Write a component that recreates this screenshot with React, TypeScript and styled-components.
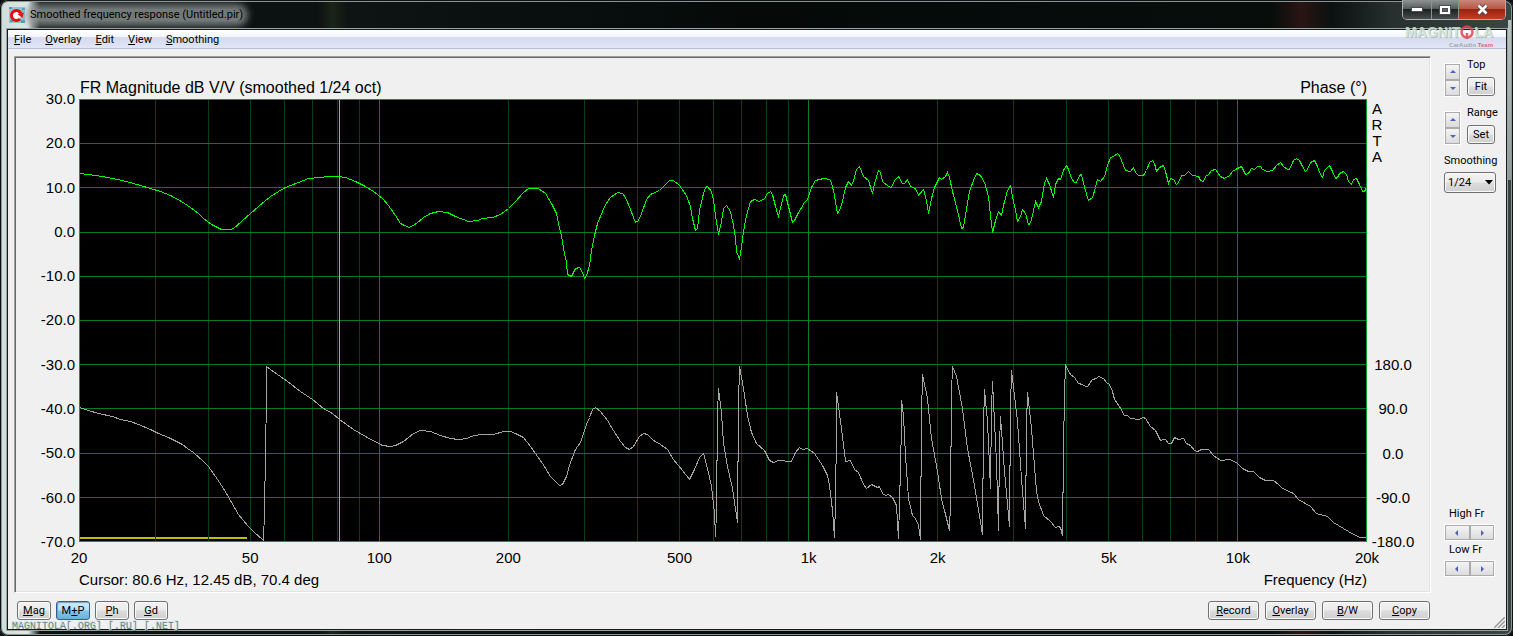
import React from "react";
import styled, { createGlobalStyle, css } from "styled-components";

const GlobalStyle = createGlobalStyle`
  * { box-sizing: border-box; }
  body { margin: 0; background: #0a0f0e; }
  button, select { font: inherit; color: inherit; margin: 0; }
`;

const uiFont = `Roboto, "Liberation Sans", sans-serif`;
const chartFont = `"Liberation Sans", Arial, sans-serif`;

/* ---------- window ---------- */

const Frame = styled.main`
  position: relative;
  display: flex;
  flex-direction: column;
  min-height: 100vh;
  padding: 0 6px 6px 7px;
  border-radius: 8px;
  font: 11px/14px ${uiFont};
  color: #000;
  background:
    linear-gradient(#b9c3c1, #8f9a98) right 0 top 20px / 5px 160px no-repeat,
    linear-gradient(90deg, #cfdcd9 0, #dfe8e6 28px, rgba(220, 230, 228, 0) 40px) left top / 60px 100% no-repeat,
    linear-gradient(90deg, #0b1211 0, #0b1211 21%, #1a2418 22%, #0d1413 23%, #050a09 50%, #060d0b 84%, #2a1513 86%, #0a1110 88%, #27302f 92%, #3b4544 100%);
  box-shadow: inset 0 0 0 1px #0c1010, inset 0 0 0 2px #8b9694;
`;

const TitleBar = styled.header`
  display: flex;
  justify-content: space-between;
  align-items: flex-start;
  height: 29px;
  padding-left: 2px;
`;

const TitleText = styled.h1`
  display: flex;
  align-items: center;
  gap: 5px;
  margin: 7px 0 0;
  font: inherit;
  line-height: 16px;

  span {
    background: rgba(150, 156, 155, 0.75);
    box-shadow: 0 0 7px 5px rgba(150, 156, 155, 0.75);
    border-radius: 8px;
    line-height: 12px;
  }
`;

const CaptionGroup = styled.div`
  display: flex;
  height: 20px;
  margin: 0 1px;
  border: 1px solid #a9b1b0;
  border-top: 0;
  border-radius: 0 0 5px 5px;
  overflow: hidden;
`;

const CaptionButton = styled.button<{ $w: number; $danger?: boolean }>`
  display: grid;
  place-items: center;
  width: ${(p) => p.$w}px;
  padding: 0;
  border: 0;
  border-left: 1px solid #8b9392;
  &:first-child { border-left: 0; }
  background: ${(p) =>
    p.$danger
      ? "linear-gradient(#c98678 0, #b85a48 45%, #9c2312 50%, #c43c20 100%)"
      : "linear-gradient(#8d9392 0, #565d5c 45%, #1c2221 50%, #474e4d 100%)"};
`;

const Client = styled.div`
  flex: 1;
  display: flex;
  flex-direction: column;
  border: 1px solid #15191a;
  background: #f0f0f0;
  box-shadow: 0 0 0 1px #9aa5a3;
`;

const MenuBar = styled.nav`
  display: flex;
  gap: 14px;
  height: 19px;
  padding: 0 6px;
  border-bottom: 1px solid #b5bbd3;
  background: linear-gradient(#fff 0, #f2f5fb 38%, #d5dbee 42%, #e0e6f5 100%);
`;

const MenuItem = styled.a`
  color: #000;
  text-decoration: none;
  line-height: 20px;
`;

const Key = styled.u`
  text-underline-offset: 1px;
`;

/* ---------- body ---------- */

const Body = styled.div`
  flex: 1;
  display: grid;
  grid-template-columns: minmax(0, 1fr) 75px;
  padding: 7px 0 0 6px;
`;

const Panel = styled.section`
  display: grid;
  grid-template-columns: 64px minmax(0, 1fr) 63px;
  padding: 21px 0 2px;
  border: 1px solid;
  border-color: #a0a0a0 #fff #fff #a0a0a0;
  box-shadow: inset 1px 1px 0 #696969, inset -1px -1px 0 #e3e3e3;
  font: 15px/20px ${chartFont};
`;

const ChartHeader = styled.div`
  grid-column: 2;
  display: flex;
  justify-content: space-between;
  margin-bottom: 1px;
  padding-left: 1px;
  font-size: 16px;
`;

const LeftAxis = styled.div`
  grid-column: 1;
  display: flex;
  flex-direction: column;
  justify-content: space-between;
  margin: -10px 0;
  padding-right: 4px;
  text-align: right;
`;

const RightAxis = styled.div`
  display: flex;
  flex-direction: column;
  justify-content: space-between;
  margin-bottom: -10px;
`;

const Brand = styled.div`
  display: flex;
  flex-direction: column;
  align-items: center;
  width: 20px;
  padding-top: 2px;
  line-height: 16px;
`;

const PhaseScale = styled.div`
  display: flex;
  flex-direction: column;
  justify-content: space-between;
  width: 52px;
  height: 197px;
  text-align: center;
`;

const Plot = styled.svg`
  display: block;
  width: 100%;
  height: 443px;
  background: #000;
  shape-rendering: crispEdges;

  line, polyline, rect {
    fill: none;
    vector-effect: non-scaling-stroke;
  }
`;

const BottomAxis = styled.div`
  grid-column: 2;
  display: flex;
  margin-top: 6px;
`;

const Tick = styled.span<{ $span: number }>`
  flex: ${(p) => p.$span} 0 0;
  min-width: 0;
  display: flex;

  span {
    display: flex;
    justify-content: center;
    width: 0;
    white-space: nowrap;
  }
`;

const LastTick = styled.span`
  display: flex;
  justify-content: center;
  width: 0;
`;

const ChartFooter = styled.div`
  grid-column: 2;
  display: flex;
  justify-content: space-between;
  margin-top: 2px;
`;

/* ---------- controls ---------- */

const Side = styled.aside`
  display: flex;
  flex-direction: column;
  justify-content: space-between;
  padding: 2px 9px 16px 13px;
`;

const Stack = styled.div<{ $gap?: number }>`
  display: flex;
  flex-direction: column;
  gap: ${(p) => p.$gap ?? 0}px;
`;

const SpinRow = styled.div`
  display: grid;
  grid-template-columns: 17px 33px;
  column-gap: 6px;
  height: 48px;
`;

const Spin = styled.div<{ $horizontal?: boolean }>`
  display: flex;
  flex-direction: ${(p) => (p.$horizontal ? "row" : "column")};
  align-self: start;
  width: ${(p) => (p.$horizontal ? "51px" : "17px")};
  height: ${(p) => (p.$horizontal ? "17px" : "34px")};
  margin-top: ${(p) => (p.$horizontal ? "0" : "5px")};
  border: 1px solid #fff;
`;

const SpinButton = styled.button`
  flex: 1;
  display: grid;
  place-items: center;
  min-width: 0;
  min-height: 0;
  padding: 0;
  border: 1px solid #a9abae;
  background: linear-gradient(#f4f4f4, #dcdcdc);
`;

const FieldLabel = styled.label`
  white-space: nowrap;
`;

const SpinCaption = styled.span`
  padding: 2px 0 3px 5px;
`;

const face = css`
  border: 1px solid #707070;
  border-radius: 3px;
  background: linear-gradient(#f2f2f2 0, #ebebeb 48%, #dddddd 52%, #cfcfcf 100%);
  box-shadow: inset 0 0 0 1px #fafafa;
`;

const PushButton = styled.button<{ $w: number; $active?: boolean }>`
  ${face}
  width: ${(p) => p.$w}px;
  height: 19px;
  padding: 0;
  line-height: 16px;
  ${(p) =>
    p.$active &&
    css`
      border-color: #2c628b;
      background: linear-gradient(#d6ebf7 0, #b5dcf0 48%, #86c4e6 52%, #68b3db 100%);
      box-shadow: inset 1px 1px 1px #7d9fb4;
    `}
`;

const SelectBox = styled.div`
  display: grid;
  align-items: center;
  margin-top: 4px;

  select, svg { grid-area: 1 / 1; }
  svg { justify-self: end; margin-right: 4px; pointer-events: none; }
`;

const Select = styled.select`
  ${face}
  appearance: none;
  width: 52px;
  height: 21px;
  padding: 0 3px;
`;

const Footer = styled.footer`
  display: flex;
  justify-content: space-between;
  padding: 8px 76px 9px 9px;
`;

const Group = styled.div<{ $gap: number }>`
  display: flex;
  gap: ${(p) => p.$gap}px;
`;

/* ---------- overlays ---------- */

const Logo = styled.div`
  position: absolute;
  top: 22px;
  right: 20px;
  display: flex;
  flex-direction: column;
  align-items: flex-end;
  opacity: 0.85;
`;

const LogoWord = styled.div`
  display: flex;
  align-items: center;
  height: 20px;
  color: #cfe3d4;
  font: bold 14px/20px "Liberation Sans", sans-serif;
  text-shadow: 1px 1px 0 #a9b8b0;
`;

const LogoTag = styled.div`
  color: #9a9aa4;
  font: bold 6px/7px "Liberation Sans", sans-serif;
  b { color: #e0525c; }
`;

const SiteMark = styled.div`
  position: absolute;
  left: 12px;
  bottom: 3px;
  color: #6f8387;
  font: 10px/12px "Liberation Mono", monospace;
  text-shadow: -1px -1px 0 #c3e2e8;
  white-space: pre;
`;

const Grip = styled.svg`
  position: absolute;
  right: 8px;
  bottom: 8px;
`;

/* ---------- chart data, in plot pixels with the origin at (79, 99) ---------- */

const magnitude =
  "79,173 88,174 94,175 102,176 112,178 122,180 133,183 140,185 150,188 160,191 170,195 181,201 190,207 198,213 203,218 211,224 217,227 221,229 230,229 233,228 241,221 250,213 258,206 270,196 278,191 285,187 298,182 308,178 320,177 328,176 338,176 345,177 355,181 365,186 373,191 382,198 388,205 395,215 400,223 404,225 409,227 416,223 423,217 430,213 438,211 447,212 455,216 468,221 477,220 482,218 492,217 500,214 508,208 515,201 523,192 528,188 538,188 545,193 551,203 556,213 558,223 561,235 563,248 566,262 567,274 571,276 575,268 579,267 582,272 584,278 586,275 589,265 591,250 594,235 597,223 602,211 605,204 610,197 617,192 622,193 625,197 630,209 635,222 638,220 641,213 646,199 650,194 659,190 663,186 669,180 673,180 679,185 686,195 690,206 692,218 695,230 697,228 699,210 703,193 705,187 707,186 711,191 713,200 715,215 718,234 721,221 723,208 726,205 730,211 733,225 735,238 736,251 738,256 739,259 741,246 743,231 746,215 750,201 754,199 759,201 764,198 767,193 770,191 772,194 775,206 778,216 780,208 783,195 785,194 788,206 792,222 794,220 797,214 800,209 804,202 807,199 811,187 815,180 823,178 829,179 831,182 834,195 837,213 839,210 842,201 845,187 848,181 851,185 853,180 856,169 859,166 863,176 868,180 872,193 874,183 878,170 880,172 882,181 888,186 891,187 894,180 898,176 902,183 904,183 907,179 910,186 915,188 918,195 923,189 926,200 928,213 931,198 934,187 939,177 941,179 945,176 947,172 949,177 952,191 957,210 961,228 963,227 966,208 969,191 973,180 976,173 980,175 984,182 988,196 990,215 992,232 995,220 998,211 1001,215 1003,205 1007,190 1010,185 1012,196 1015,210 1017,221 1020,216 1022,209 1025,213 1028,224 1030,223 1033,210 1035,201 1038,207 1041,201 1044,183 1046,178 1049,184 1053,197 1055,184 1058,178 1060,179 1063,170 1066,165 1068,169 1071,178 1074,182 1076,182 1079,175 1081,174 1084,187 1088,200 1092,197 1095,187 1097,179 1100,181 1104,176 1107,165 1110,157 1113,156 1117,153 1119,155 1123,165 1125,170 1130,171 1133,167 1135,172 1138,175 1143,175 1146,170 1149,162 1152,160 1154,163 1156,171 1159,167 1163,165 1165,171 1168,183 1170,178 1173,179 1176,184 1178,182 1181,175 1184,175 1188,171 1192,175 1198,176 1200,180 1203,181 1205,176 1208,174 1211,170 1215,169 1220,176 1224,178 1229,175 1232,171 1237,168 1241,166 1245,174 1248,173 1251,168 1254,169 1257,166 1260,166 1262,169 1267,171 1272,170 1276,165 1280,162 1283,166 1287,169 1289,169 1293,160 1296,158 1299,160 1302,166 1305,171 1307,169 1310,162 1314,160 1317,166 1319,172 1322,177 1324,170 1329,165 1332,171 1335,178 1337,177 1339,173 1343,171 1346,174 1348,181 1351,184 1353,179 1356,178 1359,184 1362,191 1364,191 1366,187";

const phase =
  "79,407 88,410 98,413 112,416 120,419 130,421 138,424 150,429 158,433 168,437 182,444 187,448 193,452 203,461 208,466 215,476 223,488 230,500 238,514 247,525 253,531 263,540 264,511 265,453 266,395 266,366 270,369 287,381 300,391 312,399 323,408 332,413 339,419 353,429 365,436 382,445 390,446 395,445 403,441 413,433 420,430 430,431 440,435 450,438 458,439 467,438 470,436 480,434 493,434 503,431 510,431 515,433 523,437 530,446 542,463 550,476 559,485 562,484 566,476 569,465 574,451 577,446 580,442 582,436 586,424 589,417 592,409 595,407 600,411 607,420 613,430 620,441 625,447 629,449 633,446 639,436 643,433 647,434 653,440 660,444 667,449 673,459 682,470 689,479 694,469 699,457 703,453 707,468 711,486 714,513 715,536 716,511 717,413 718,388 721,413 723,443 727,466 732,488 737,522 738,405 739,366 743,388 747,415 751,432 756,443 764,450 769,460 773,462 778,460 791,461 795,452 799,447 802,449 807,448 814,453 822,465 827,475 829,485 832,510 834,537 835,500 836,430 836,392 838,406 842,436 845,461 850,460 854,469 858,472 863,484 866,488 871,484 877,487 879,486 882,493 885,495 888,494 892,497 896,505 898,538 900,468 901,423 901,400 903,415 905,455 908,498 912,515 915,518 918,525 920,539 921,417 922,374 927,398 931,438 937,471 941,498 949,530 950,502 951,393 952,366 956,376 962,408 967,448 974,485 982,534 983,425 984,389 987,421 990,488 991,408 992,381 996,462 998,530 999,445 1000,416 1004,471 1009,526 1010,408 1011,370 1017,421 1021,478 1025,528 1026,425 1027,392 1031,428 1036,491 1038,501 1043,515 1050,521 1055,527 1058,526 1060,527 1062,535 1063,450 1064,393 1065,365 1070,374 1074,377 1078,383 1082,384 1085,386 1087,386 1092,379 1096,378 1098,376 1103,378 1106,382 1109,384 1112,391 1114,399 1119,406 1124,415 1127,415 1130,418 1138,419 1143,417 1145,418 1150,426 1155,430 1160,440 1163,439 1165,439 1168,443 1171,443 1174,437 1178,439 1183,438 1186,443 1190,445 1194,450 1197,451 1201,449 1208,449 1213,455 1220,460 1230,459 1237,463 1242,468 1248,471 1253,471 1259,477 1265,480 1273,480 1278,484 1282,488 1293,493 1298,499 1310,506 1316,513 1327,516 1333,522 1343,528 1353,534 1360,537 1366,537";

const frequencies = [30, 40, 50, 60, 70, 80, 90, 100, 200, 300, 400, 500, 600, 700, 800, 900, 1000, 2000, 3000, 4000, 5000, 6000, 7000, 8000, 9000, 10000];
const majors = [100, 1000, 10000];
const xOf = (f: number) => Math.round(79 + 429 * Math.log10(f / 20)) + 0.5;
const rows = [143, 187, 232, 276, 320, 364, 408, 453, 497];

const levels = ["30.0", "20.0", "10.0", "0.0", "-10.0", "-20.0", "-30.0", "-40.0", "-50.0", "-60.0", "-70.0"];
const degrees = ["180.0", "90.0", "0.0", "-90.0", "-180.0"];
const ticks: [string, number][] = [
  ["20", 171], ["50", 129], ["100", 129], ["200", 171], ["500", 129], ["1k", 129], ["2k", 171], ["5k", 129], ["10k", 129],
];

function ResponsePlot() {
  return (
    <Plot viewBox="79 99 1288 443" preserveAspectRatio="none" role="img" aria-label="Magnitude and phase against frequency">
      {frequencies.map((f) => (
        <line key={f} x1={xOf(f)} x2={xOf(f)} y1="99" y2="542" stroke={majors.includes(f) ? "#0a7d28" : "#063f16"} />
      ))}
      {rows.map((y) => (
        <line key={y} x1="79" x2="1367" y1={y + 0.5} y2={y + 0.5} stroke="#067a22" />
      ))}
      {[[80, 155], [156, 208], [209, 247]].map(([a, b]) => (
        <line key={a} x1={a} x2={b} y1="538" y2="538" stroke="#c0c000" strokeWidth="2" />
      ))}
      <line x1="339.5" x2="339.5" y1="99" y2="542" stroke="#c8b020" />
      <g transform="translate(0.5 0.5)">
        <polyline points={phase} stroke="#a4a4a4" />
        <polyline points={magnitude} stroke="#00ff00" />
      </g>
      <rect x="79.5" y="99.5" width="1287" height="442" stroke="#00a030" />
    </Plot>
  );
}

const arrows = {
  up: "M1 5h6L4 2z",
  down: "M1 3h6L4 6z",
  left: "M5 1v6L2 4z",
  right: "M3 1v6l3-3z",
};

function Arrow({ dir }: { dir: keyof typeof arrows }) {
  return (
    <svg width="8" height="8" viewBox="0 0 8 8" aria-hidden="true">
      <path d={arrows[dir]} fill="#4a63b4" />
    </svg>
  );
}

function AppIcon() {
  return (
    <svg width="16" height="16" viewBox="0 0 16 16" aria-hidden="true">
      <rect width="16" height="16" fill="#8fc6d2" />
      <path d="M0 0h3v2H0zM13 1h3v2h-3zM1 13h3v2H1zM12 13h4v3h-4z" fill="#4f9fb3" />
      <circle cx="7.500" cy="8.500" r="4.500" fill="#fff" />
      <path d="M11 12A5 5 0 1 1 12 6.500" fill="none" stroke="#ec0808" strokeWidth="3" />
      <path d="M8.500 7L15 5.500L13.500 11z" fill="#ec0808" />
    </svg>
  );
}

export default function App() {
  return (
    <>
      <GlobalStyle />
      <Frame>
        <TitleBar>
          <TitleText>
            <AppIcon />
            <span>Smoothed frequency response (Untitled.pir)</span>
          </TitleText>
          <CaptionGroup>
            <CaptionButton $w={28} aria-label="Minimize">
              <svg width="12" height="5" viewBox="0 0 12 5"><rect x="0.500" y="0.500" width="11" height="4" fill="#fff" stroke="#4a4f55" /></svg>
            </CaptionButton>
            <CaptionButton $w={27} aria-label="Maximize">
              <svg width="12" height="10" viewBox="0 0 12 10">
                <rect x="0.500" y="0.500" width="11" height="9" fill="#fff" stroke="#4a4f55" />
                <rect x="3.500" y="3.500" width="5" height="3" fill="#5b6164" stroke="#4a4f55" />
              </svg>
            </CaptionButton>
            <CaptionButton $w={47} $danger aria-label="Close">
              <svg width="13" height="11" viewBox="0 0 13 11">
                <path d="M2.500 1.500l8 8M10.500 1.500l-8 8" stroke="#4f4a55" strokeWidth="4.500" />
                <path d="M2.500 1.500l8 8M10.500 1.500l-8 8" stroke="#fff" strokeWidth="2.500" />
              </svg>
            </CaptionButton>
          </CaptionGroup>
        </TitleBar>

        <Client>
          <MenuBar>
            {["File", "Overlay", "Edit", "View", "Smoothing"].map((m) => (
              <MenuItem href="#" key={m}><Key>{m[0]}</Key>{m.slice(1)}</MenuItem>
            ))}
          </MenuBar>

          <Body>
            <Panel>
              <ChartHeader>
                <span>FR Magnitude dB V/V (smoothed 1/24 oct)</span>
                <span>Phase (°)</span>
              </ChartHeader>
              <LeftAxis>{levels.map((l) => <span key={l}>{l}</span>)}</LeftAxis>
              <ResponsePlot />
              <RightAxis>
                <Brand><span>A</span><span>R</span><span>T</span><span>A</span></Brand>
                <PhaseScale>{degrees.map((d) => <span key={d}>{d}</span>)}</PhaseScale>
              </RightAxis>
              <BottomAxis>
                {ticks.map(([label, span]) => (
                  <Tick key={label} $span={span}><span>{label}</span></Tick>
                ))}
                <LastTick>20k</LastTick>
              </BottomAxis>
              <ChartFooter>
                <span>Cursor: 80.6 Hz, 12.45 dB, 70.4 deg</span>
                <span>Frequency (Hz)</span>
              </ChartFooter>
            </Panel>

            <Side>
              <Stack>
                <SpinRow>
                  <Spin>
                    <SpinButton aria-label="Top up"><Arrow dir="up" /></SpinButton>
                    <SpinButton aria-label="Top down"><Arrow dir="down" /></SpinButton>
                  </Spin>
                  <Stack $gap={5}>
                    <FieldLabel htmlFor="fit">Top</FieldLabel>
                    <PushButton id="fit" $w={28}>Fit</PushButton>
                  </Stack>
                </SpinRow>
                <SpinRow>
                  <Spin>
                    <SpinButton aria-label="Range up"><Arrow dir="up" /></SpinButton>
                    <SpinButton aria-label="Range down"><Arrow dir="down" /></SpinButton>
                  </Spin>
                  <Stack $gap={5}>
                    <FieldLabel htmlFor="set">Range</FieldLabel>
                    <PushButton id="set" $w={28}>Set</PushButton>
                  </Stack>
                </SpinRow>
                <FieldLabel htmlFor="smoothing">Smoothing</FieldLabel>
                <SelectBox>
                  <Select id="smoothing" defaultValue="1/24">
                    <option>1/24</option>
                  </Select>
                  <svg width="8" height="5" viewBox="0 0 8 5" aria-hidden="true"><path d="M0 0h8L4 4.500z" /></svg>
                </SelectBox>
              </Stack>
              <Stack>
                <SpinCaption>High Fr</SpinCaption>
                <Spin $horizontal>
                  <SpinButton aria-label="High frequency down"><Arrow dir="left" /></SpinButton>
                  <SpinButton aria-label="High frequency up"><Arrow dir="right" /></SpinButton>
                </Spin>
                <SpinCaption>Low Fr</SpinCaption>
                <Spin $horizontal>
                  <SpinButton aria-label="Low frequency down"><Arrow dir="left" /></SpinButton>
                  <SpinButton aria-label="Low frequency up"><Arrow dir="right" /></SpinButton>
                </Spin>
              </Stack>
            </Side>
          </Body>

          <Footer>
            <Group $gap={5}>
              <PushButton $w={34}><Key>M</Key>ag</PushButton>
              <PushButton $w={34} $active>M<Key>+</Key>P</PushButton>
              <PushButton $w={34}><Key>P</Key>h</PushButton>
              <PushButton $w={34}><Key>G</Key>d</PushButton>
            </Group>
            <Group $gap={6}>
              <PushButton $w={51}><Key>R</Key>ecord</PushButton>
              <PushButton $w={51}><Key>O</Key>verlay</PushButton>
              <PushButton $w={51}><Key>B</Key>/W</PushButton>
              <PushButton $w={51}><Key>C</Key>opy</PushButton>
            </Group>
          </Footer>
        </Client>

        <Grip width="11" height="11" viewBox="0 0 11 11" aria-hidden="true">
          <path d="M0 11L11 0M4 11l7-7M8 11l3-3" stroke="#9a9a9a" strokeWidth="1.500" />
        </Grip>
        <Logo>
          <LogoWord>
            MAGNIT
            <svg width="14" height="16" viewBox="0 0 14 16" aria-hidden="true">
              <circle cx="7" cy="8" r="5.500" fill="none" stroke="#e2434c" strokeWidth="2.500" />
              <path d="M7 9v6" stroke="#e2434c" strokeWidth="2.500" />
            </svg>
            LA
          </LogoWord>
          <LogoTag>CarAudio <b>Team</b></LogoTag>
        </Logo>
        <SiteMark>MAGNITOLA[.ORG] [.RU] [.NET]</SiteMark>
      </Frame>
    </>
  );
}
